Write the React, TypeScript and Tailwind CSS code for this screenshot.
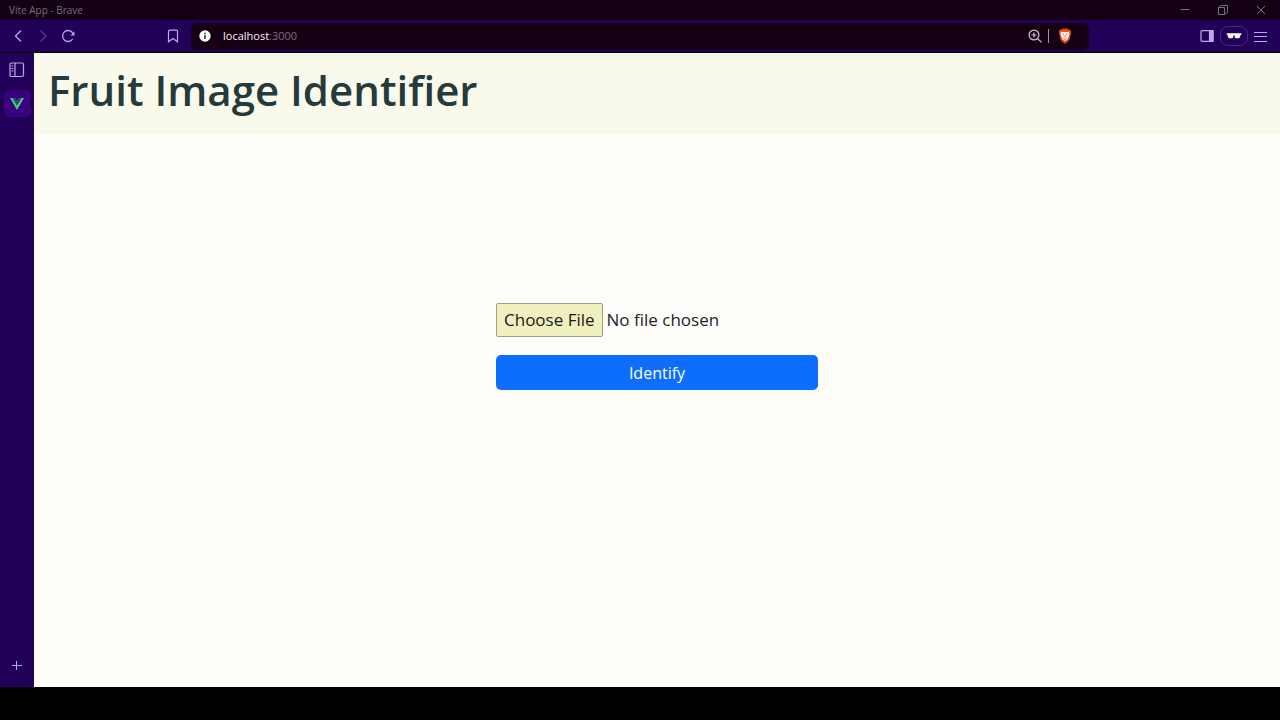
import type { ReactNode } from "react";

function IconButton({ label, children, className = "" }: { label: string; children: ReactNode; className?: string }) {
  return (
    <button type="button" aria-label={label} className={`flex shrink-0 items-center justify-center ${className}`}>
      {children}
    </button>
  );
}

function TitleBar() {
  return (
    <header className="flex h-5 items-center justify-between bg-[#130013] pl-[9px] text-[#77707c]">
      <span className="text-[10px] leading-5">Vite App - Brave</span>
      <div className="flex">
        <IconButton label="Minimize" className="h-5 w-[38px]">
          <svg width="12" height="12" viewBox="0 0 12 12" fill="none" stroke="currentColor"><path d="M1.5 5.5h9" /></svg>
        </IconButton>
        <IconButton label="Restore" className="h-5 w-[38px]">
          <svg width="12" height="12" viewBox="0 0 12 12" fill="none" stroke="currentColor"><path d="M1.500 3.500h6v7h-6zM1.500 3.500L3.500 1.500h7v7l-3 2" /></svg>
        </IconButton>
        <IconButton label="Close" className="h-5 w-[38px]">
          <svg width="12" height="12" viewBox="0 0 12 12" fill="none" stroke="currentColor"><path d="M2 2l8 8M10 2l-8 8" /></svg>
        </IconButton>
      </div>
    </header>
  );
}

function Toolbar() {
  return (
    <nav className="flex h-[33px] items-center border-b border-black bg-[#22005a] pr-[11px] pl-[10px] text-[#c3a5ec]">
      <IconButton label="Back" className="size-4">
        <svg width="16" height="16" viewBox="0 0 16 16" fill="none" stroke="currentColor" strokeWidth="1.300"><path d="M11 2.500L5.500 8l5.500 5.500" /></svg>
      </IconButton>
      <IconButton label="Forward" className="ml-[9px] size-4 text-[#5d3a8c]">
        <svg width="16" height="16" viewBox="0 0 16 16" fill="none" stroke="currentColor" strokeWidth="1.300"><path d="M5.500 2.500L11 8l-5.500 5.500" /></svg>
      </IconButton>
      <IconButton label="Reload" className="ml-[9px] size-4">
        <svg width="16" height="16" viewBox="0 0 16 16" fill="none" stroke="currentColor" strokeWidth="1.300">
          <path d="M12.600 11.200A5.500 5.500 0 1 1 13 5.500" />
          <path d="M14.500 3.500v4h-4z" fill="currentColor" stroke="none" />
        </svg>
      </IconButton>
      <IconButton label="Bookmark" className="ml-[89px] size-4">
        <svg width="16" height="16" viewBox="0 0 16 16" fill="none" stroke="currentColor" strokeWidth="1.200"><path d="M3.500 3.200q0-1 1-1h7q1 0 1 1v10.600L8 10.500l-4.500 3.300z" /></svg>
      </IconButton>
      <div className="ml-[10px] flex h-[27px] max-w-[898px] grow items-center rounded-md bg-[#160014] pr-4 pl-2">
        <IconButton label="Site information" className="size-3">
          <svg width="12" height="12" viewBox="0 0 12 12"><circle cx="6" cy="6" r="5.700" fill="#fff" /><path d="M6 5.200v3.600M6 2.800v1.400" stroke="#160014" strokeWidth="1.400" /></svg>
        </IconButton>
        <span className="ml-3 grow text-[11px] text-[#77727a]"><span className="text-[#f4f2f6]">localhost</span>:3000</span>
        <IconButton label="Zoom" className="size-4 text-[#c9c2d2]">
          <svg width="16" height="16" viewBox="0 0 16 16" fill="none" stroke="currentColor" strokeWidth="1.200"><circle cx="7" cy="7" r="4.900" /><path d="M10.600 10.600L14.500 14.200M4.500 7h5M7 4.500v5" /></svg>
        </IconButton>
        <span className="ml-[5px] h-3.5 w-px bg-[#9a92a5]" />
        <IconButton label="Brave Shields" className="ml-2 size-4">
          <svg width="16" height="16" viewBox="0 0 16 16">
            <path d="M4.500 1.500L6 .5h4l1.500 1 1.500.3 1.300 1.900-.4 1.500-1.400 6.200-1.500 2.200L8 15.700l-3-2.100-1.500-2.200L2.100 5.200l-.4-1.500L3 1.800z" fill="#e84a1b" />
            <path d="M4.500 3.500l2 .8L8 3.700l1.500.6 2-.8 1 2-.5 2.600-1.300 3.100L8 13l-2.700-1.800L4 8.100l-.5-2.600z" fill="#fff0e4" />
            <path d="M5 5.600l2 .7-.5 1zM11 5.600l-2 .7.500 1zM7.300 7.500h1.400L8 9.500zM6 10.200l2 .6 2-.6-2 1.500z" fill="#d94316" />
          </svg>
        </IconButton>
      </div>
      <IconButton label="Side panel" className="ml-auto size-4">
        <svg width="16" height="16" viewBox="0 0 16 16" fill="none" stroke="currentColor" strokeWidth="1.200"><rect x="2" y="2.600" width="12" height="10.800" rx="1" /><path d="M10.500 2.600H14v10.800h-3.500z" fill="currentColor" /></svg>
      </IconButton>
      <IconButton label="Private window" className="ml-[5px] h-5 w-7 rounded-lg border border-[#4c277f]">
        <svg width="16" height="8" viewBox="0 0 16 8" fill="#fff"><path d="M.7 1.200H15.300v1.500l-.8.3-.7 2.500-1 .7H10L8.900 5.400 8.500 3.300h-1L7.100 5.400 6 6.200H3.200l-1-.7L1.500 3l-.8-.3z" /></svg>
      </IconButton>
      <IconButton label="Menu" className="ml-[5px] size-4">
        <svg width="16" height="16" viewBox="0 0 16 16" fill="none" stroke="currentColor"><path d="M1 4.500h13M1 8.500h13M1 13.500h13" /></svg>
      </IconButton>
    </nav>
  );
}

function TabRail() {
  return (
    <aside className="flex w-[34px] shrink-0 flex-col items-center bg-[#22005a] pt-2 pb-[14px] text-[#c3a5ec]">
      <IconButton label="Toggle vertical tabs" className="size-[18px]">
        <svg width="18" height="18" viewBox="0 0 18 18" fill="none" stroke="currentColor" strokeWidth="1.200"><rect x="2" y="2" width="13.500" height="13.500" rx="1.500" /><path d="M7 2v13.500M3.500 5h2M3.500 7.500h2M3.500 10h2" /></svg>
      </IconButton>
      <IconButton label="Vite App tab" className="mt-[11px] size-[27px] rounded-md bg-[#3a007d]">
        <svg width="14" height="12" viewBox="0 0 14 12"><path d="M0 0h2.800L7 7.300 11.200 0H14L7 12z" fill="#41c68b" /><path d="M2.800 0h2.600L7 2.800 8.600 0h2.600L7 7.300z" fill="#35495e" /></svg>
      </IconButton>
      <div className="grow" />
      <IconButton label="New tab" className="size-4">
        <svg width="16" height="16" viewBox="0 0 16 16" fill="none" stroke="currentColor"><path d="M3 8.500h10M7.500 4v9" /></svg>
      </IconButton>
    </aside>
  );
}

function FruitPage() {
  return (
    <main className="min-w-0 grow bg-[#fefdfa] text-[#212529]">
      <div className="bg-[#fafaec] px-3.5 pt-1 pb-3">
        <h1 className="text-[42px] leading-[65px] font-semibold text-[#263a3c]">Fruit Image Identifier</h1>
      </div>
      <form className="mx-auto mt-[169px] flex w-[322px] flex-col gap-[18px]" onSubmit={(e) => e.preventDefault()}>
        <input
          type="file"
          aria-label="Fruit image"
          className="h-[34px] w-full text-[17px] leading-6 file:mr-1 file:h-[34px] file:rounded-xs file:border file:border-solid file:border-[#a0a088] file:bg-[#f0efbe] file:px-[7px] file:text-[#171b1c]"
        />
        <button type="submit" className="h-[35px] rounded-[5px] bg-[#0d6efd] text-[16px] leading-6 text-white">Identify</button>
      </form>
    </main>
  );
}

export default function App() {
  return (
    <div className="flex min-h-screen flex-col bg-black pb-[33px] font-['Open_Sans','Noto_Sans',sans-serif]">
      <TitleBar />
      <Toolbar />
      <div className="flex grow">
        <TabRail />
        <FruitPage />
      </div>
    </div>
  );
}
